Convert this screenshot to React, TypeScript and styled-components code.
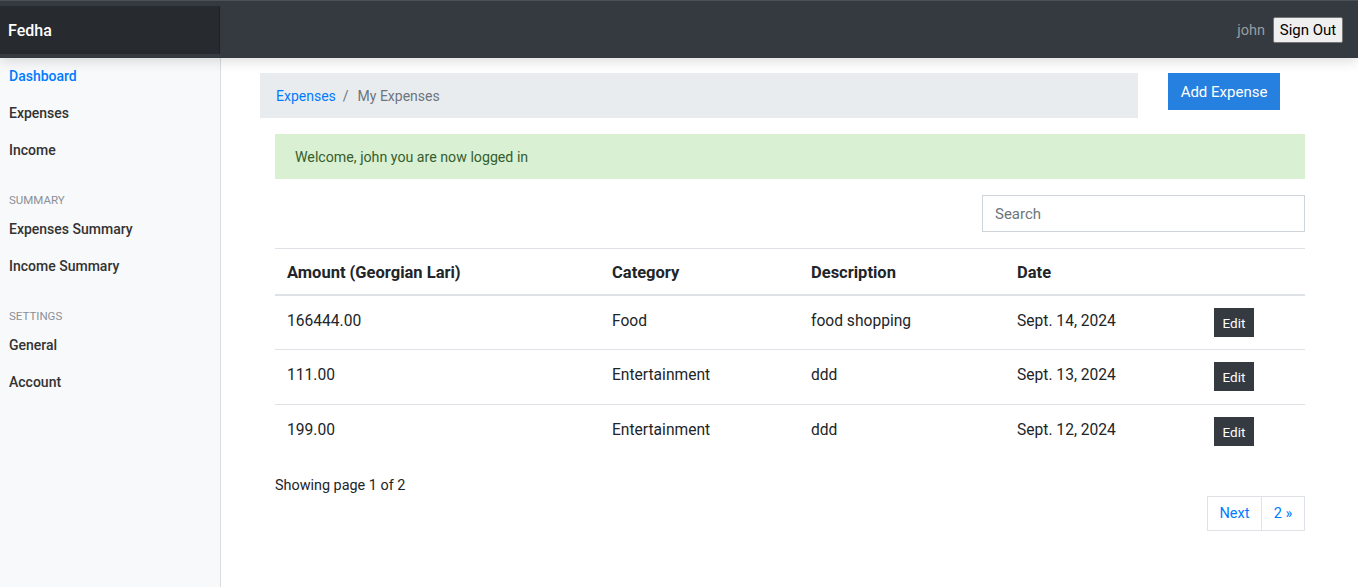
import React from "react";
import styled, { createGlobalStyle } from "styled-components";

const Global = createGlobalStyle`
  html, body { margin: 0; padding: 0; background: #fff; }
  body {
    font-family: "Segoe UI", Roboto, "Noto Sans", "Liberation Sans", sans-serif;
    color: #212529;
    font-size: 16px;
  }
  * { box-sizing: border-box; }
`;

const Page = styled.div`
  display: flex;
  flex-direction: column;
  min-height: 587px;
`;

const TopBar = styled.header`
  position: relative;
  z-index: 2;
  height: 58px;
  background: #343a40;
  border-top: 1px solid #4b5056;
  display: flex;
  align-items: flex-start;
  justify-content: space-between;
  box-shadow: 0 3px 12px rgba(0, 0, 0, 0.14);
`;

const Brand = styled.div`
  width: 220px;
  height: 48px;
  margin-top: 5px;
  background: rgba(0, 0, 0, 0.25);
  box-shadow: inset -1px 0 0 rgba(0, 0, 0, 0.25);
  color: #fff;
  font-size: 16px;
  font-weight: 500;
  display: flex;
  align-items: center;
  padding-left: 8px;
`;

const UserArea = styled.div`
  display: flex;
  align-items: center;
  gap: 8px;
  margin-top: 16px;
  margin-right: 15px;
`;

const UserName = styled.span`
  color: #9a9da0;
  font-size: 14.5px;
`;

const SignOut = styled.button`
  font-family: inherit;
  font-size: 15px;
  color: #000;
  background: #efefef;
  border: 1px solid #767676;
  border-radius: 2px;
  height: 26px;
  width: 70px;
  padding: 0;
`;

const Body = styled.div`
  display: flex;
  flex: 1;
`;

const Sidebar = styled.nav`
  width: 221px;
  flex: 0 0 221px;
  background: #f8f9fa;
  border-right: 1px solid #dcdcdc;
  display: flex;
  flex-direction: column;
  min-height: 529px;
`;

const NavLink = styled.a<{ $active?: boolean }>`
  display: block;
  padding: 8px 9px;
  font-size: 14px;
  line-height: 21px;
  font-weight: 500;
  color: ${(p) => (p.$active ? "#007bff" : "#333")};
  text-decoration: none;
`;

const SideHeading = styled.div`
  margin: 22px 0 2px;
  padding: 0 9px;
  font-size: 11.5px;
  line-height: 18px;
  text-transform: uppercase;
  color: #8a9097;
`;

const Main = styled.main`
  flex: 1;
  padding: 15px 53px 0 54px;
  display: flex;
  flex-direction: column;
`;

const HeaderRow = styled.div`
  display: flex;
  align-items: flex-start;
  gap: 30px;
  margin-left: -15px;
`;

const Breadcrumb = styled.ol`
  list-style: none;
  margin: 0;
  flex: 0 0 878px;
  height: 45px;
  background: #e9ecef;
  padding: 12px 16px;
  display: flex;
  font-size: 14px;
  line-height: 22px;
`;

const Crumb = styled.li<{ $active?: boolean }>`
  color: ${(p) => (p.$active ? "#6c757d" : "#007bff")};
  &:not(:first-child)::before {
    content: "/";
    color: #6c757d;
    padding: 0 9px 0 7px;
  }
`;

const PrimaryButton = styled.button`
  font-family: inherit;
  font-size: 15px;
  color: #fff;
  background: #2680e0;
  border: none;
  border-radius: 0;
  width: 112px;
  height: 37px;
  padding: 0;
`;

const Alert = styled.div`
  margin-top: 16px;
  height: 45px;
  background: #daf0d2;
  color: #355e2e;
  font-size: 14.2px;
  padding: 0 20px;
  display: flex;
  align-items: center;
`;

const SearchRow = styled.div`
  display: flex;
  justify-content: flex-end;
  margin-top: 16px;
`;

const SearchInput = styled.input`
  width: 323px;
  height: 37px;
  border: 1px solid #ced4da;
  padding: 0 12px;
  font-family: inherit;
  font-size: 15px;
  color: #495057;
  &::placeholder { color: #6c757d; }
`;

const Table = styled.table`
  margin-top: 16px;
  width: 100%;
  border-collapse: collapse;
  table-layout: fixed;
`;

const Col = styled.col<{ $w: number }>`
  width: ${(p) => p.$w}px;
`;

const Th = styled.th`
  text-align: left;
  font-size: 16.5px;
  font-weight: 700;
  line-height: 25px;
  padding: 11px 12px 9px;
  border-top: 1px solid #dee2e6;
  border-bottom: 2px solid #dee2e6;
`;

const Td = styled.td`
  vertical-align: top;
  font-size: 15.6px;
  line-height: 26px;
  padding: 12px 12px 13px;
  border-top: 1px solid #dee2e6;
  tbody tr:first-child & { padding-bottom: 12px; }
`;

const EditButton = styled.button`
  font-family: inherit;
  background: #343a40;
  color: #fff;
  border: none;
  border-radius: 0;
  font-size: 13.5px;
  width: 40px;
  height: 29px;
  padding: 0;
  display: block;
`;

const Footer = styled.div`
  margin-top: 16px;
  display: flex;
  flex-direction: column;
`;

const PageInfo = styled.div`
  font-size: 14.4px;
  line-height: 21px;
`;

const Pager = styled.ul`
  list-style: none;
  margin: 0;
  padding: 0;
  display: flex;
  align-self: flex-end;
`;

const PageLink = styled.li<{ $w: number }>`
  width: ${(p) => p.$w}px;
  height: 35px;
  border: 1px solid #dee2e6;
  & + & { border-left: none; }
  color: #007bff;
  font-size: 14.5px;
  display: flex;
  align-items: center;
  justify-content: center;
`;

const rows = [
  { amount: "166444.00", category: "Food", description: "food shopping", date: "Sept. 14, 2024" },
  { amount: "111.00", category: "Entertainment", description: "ddd", date: "Sept. 13, 2024" },
  { amount: "199.00", category: "Entertainment", description: "ddd", date: "Sept. 12, 2024" },
];

export default function App() {
  return (
    <Page>
      <Global />
      <TopBar>
        <Brand>Fedha</Brand>
        <UserArea>
          <UserName>john</UserName>
          <SignOut>Sign Out</SignOut>
        </UserArea>
      </TopBar>
      <Body>
        <Sidebar>
          <NavLink $active>Dashboard</NavLink>
          <NavLink>Expenses</NavLink>
          <NavLink>Income</NavLink>
          <SideHeading>Summary</SideHeading>
          <NavLink>Expenses Summary</NavLink>
          <NavLink>Income Summary</NavLink>
          <SideHeading>Settings</SideHeading>
          <NavLink>General</NavLink>
          <NavLink>Account</NavLink>
        </Sidebar>
        <Main>
          <HeaderRow>
            <Breadcrumb>
              <Crumb>Expenses</Crumb>
              <Crumb $active>My Expenses</Crumb>
            </Breadcrumb>
            <PrimaryButton>Add Expense</PrimaryButton>
          </HeaderRow>
          <Alert>Welcome, john you are now logged in</Alert>
          <SearchRow>
            <SearchInput placeholder="Search" />
          </SearchRow>
          <Table>
            <colgroup>
              <Col $w={325} />
              <Col $w={199} />
              <Col $w={206} />
              <Col $w={197} />
              <Col $w={103} />
            </colgroup>
            <thead>
              <tr>
                <Th>Amount (Georgian Lari)</Th>
                <Th>Category</Th>
                <Th>Description</Th>
                <Th>Date</Th>
                <Th />
              </tr>
            </thead>
            <tbody>
              {rows.map((r) => (
                <tr key={r.date}>
                  <Td>{r.amount}</Td>
                  <Td>{r.category}</Td>
                  <Td>{r.description}</Td>
                  <Td>{r.date}</Td>
                  <Td>
                    <EditButton>Edit</EditButton>
                  </Td>
                </tr>
              ))}
            </tbody>
          </Table>
          <Footer>
            <PageInfo>Showing page 1 of 2</PageInfo>
            <Pager>
              <PageLink $w={55}>Next</PageLink>
              <PageLink $w={43}>2 »</PageLink>
            </Pager>
          </Footer>
        </Main>
      </Body>
    </Page>
  );
}
